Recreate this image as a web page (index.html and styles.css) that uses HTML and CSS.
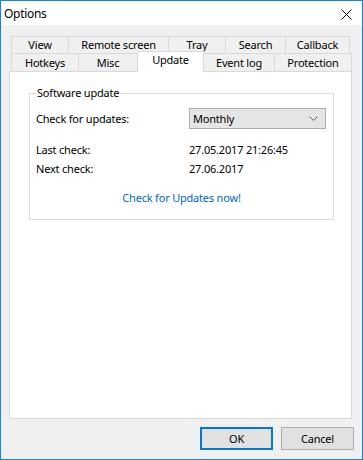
FILE: index.html
```html
<!DOCTYPE html>
<html>
<head>
    <title>Options</title>
    <link rel="stylesheet" href="styles.css">
</head>
<body>

<div class="window">
    <div class="titlebar">
        <span class="title">Options</span>
        <svg class="close" width="11" height="11" viewBox="0 0 11 11">
            <path d="M0.5 0.5 L10.5 10.5 M10.5 0.5 L0.5 10.5" stroke="#000" stroke-width="1" fill="none"/>
        </svg>
    </div>

    <div class="content">
        <div class="tabs">
            <div class="tab-row top">
                <div class="tab" style="width:58px">View</div>
                <div class="tab" style="width:101px">Remote screen</div>
                <div class="tab" style="width:58px">Tray</div>
                <div class="tab" style="width:61px">Search</div>
                <div class="tab" style="width:65px">Callback</div>
            </div>
            <div class="tab-row bottom">
                <div class="tab" style="width:68px">Hotkeys</div>
                <div class="tab" style="width:60px">Misc</div>
                <div class="tab selected" style="width:67px">Update</div>
                <div class="tab" style="width:72px">Event log</div>
                <div class="tab" style="width:78px">Protection</div>
            </div>
        </div>

        <div class="panel">
            <fieldset class="group">
                <legend>Software update</legend>
                <div class="row combo-row">
                    <span class="label">Check for updates:</span>
                    <div class="combo">
                        <span>Monthly</span>
                        <svg width="9" height="5" viewBox="0 0 9 5">
                            <path d="M0.5 0.5 L4.5 4.5 L8.5 0.5" stroke="#606060" stroke-width="1" fill="none"/>
                        </svg>
                    </div>
                </div>
                <div class="row info first">
                    <span class="label">Last check:</span>
                    <span>27.05.2017 21:26:45</span>
                </div>
                <div class="row info">
                    <span class="label">Next check:</span>
                    <span>27.06.2017</span>
                </div>
                <div class="link-row">
                    <a class="link" href="#">Check for Updates now!</a>
                </div>
            </fieldset>
        </div>

        <div class="buttons">
            <button class="btn default">OK</button>
            <button class="btn">Cancel</button>
        </div>
    </div>
</div>

</body>
</html>
```

FILE: styles.css
```css
body {
    margin: 0;
    font-family: "Noto Sans", "Liberation Sans", sans-serif;
    font-size: 11px;
    letter-spacing: -0.2px;
    color: #000;
}

.window {
    width: 363px;
    height: 460px;
    box-sizing: border-box;
    border: 1px solid #1883d7;
    background-color: #f0f0f0;
    display: flex;
    flex-direction: column;
}

.titlebar {
    height: 24px;
    background-color: #fff;
    display: flex;
    align-items: center;
    justify-content: space-between;
    padding: 0 10px 0 3px;
}

.title {
    font-size: 12px;
    letter-spacing: -0.3px;
}

.close {
    margin-top: 2px;
}

.content {
    padding: 11px 0 0 8px;
}

.tabs {
    padding-left: 2px;
    line-height: 15px;
}

.tab-row {
    display: flex;
}

.tab {
    box-sizing: border-box;
    height: 17px;
    border: 1px solid #d9d9d9;
    border-bottom: none;
    margin-right: -1px;
    background-color: #f0f0f0;
    text-align: center;
    position: relative;
}

.tab-row.bottom .tab {
    height: 18px;
    padding-top: 1px;
}

.tab-row.bottom .tab.selected {
    height: 21px;
    margin-top: -2px;
    margin-bottom: -1px;
    padding-top: 0;
    background-color: #fff;
    z-index: 1;
}

.panel {
    box-sizing: border-box;
    width: 343px;
    height: 348px;
    border: 1px solid #d9d9d9;
    background-color: #fff;
    padding: 13px 0 0 19px;
}

.group {
    box-sizing: border-box;
    width: 305px;
    margin: 0;
    border: 1px solid #dcdcdc;
    padding: 0 6px 13px 6px;
}

.group legend {
    padding: 0 1px;
    margin-left: 0;
    line-height: 16px;
}

.row {
    display: flex;
    align-items: center;
    line-height: 16px;
}

.label {
    width: 153px;
}

.combo-row {
    margin-top: 7px;
}

.combo {
    box-sizing: border-box;
    width: 137px;
    height: 21px;
    border: 1px solid #adadad;
    background-color: #e5e5e5;
    display: flex;
    align-items: center;
    justify-content: space-between;
    padding: 0 7px 0 3px;
}

.info {
    margin-top: 3px;
}

.info.first {
    margin-top: 13px;
}

.link-row {
    margin-top: 13px;
    text-align: center;
    line-height: 16px;
}

.link {
    color: #0066cc;
    text-decoration: none;
}

.buttons {
    display: flex;
    justify-content: flex-end;
    gap: 8px;
    padding-right: 8px;
    margin-top: 8px;
}

.btn {
    box-sizing: border-box;
    width: 73px;
    height: 23px;
    font-family: inherit;
    font-size: 11px;
    letter-spacing: -0.2px;
    background-color: #e1e1e1;
    border: 1px solid #adadad;
    padding: 0;
    color: #000;
}

.btn.default {
    border: 2px solid #0078d7;
}
```
